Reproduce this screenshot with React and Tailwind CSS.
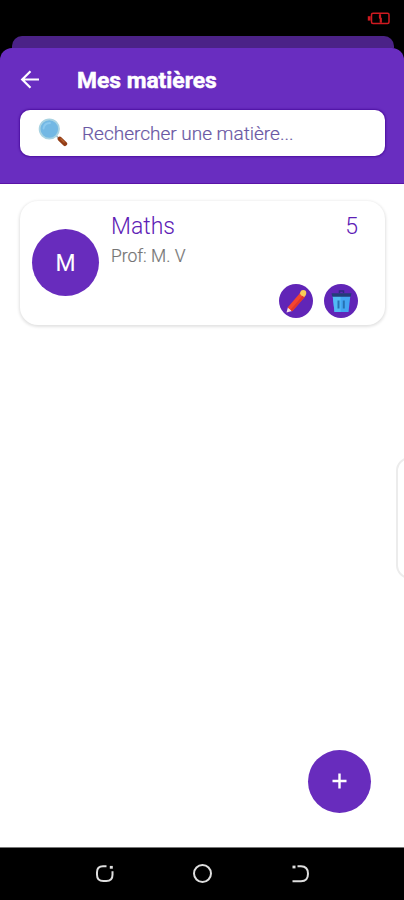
function SearchGlass() {
  return (
    <svg width="30" height="30" viewBox="0 0 30 30" fill="none">
      <path d="M18 17.500l3 3" stroke="#a3b3ba" strokeWidth="1.600" />
      <path d="M21.800 20.800l5.200 5" stroke="#933d16" strokeWidth="4.400" strokeLinecap="round" />
      <path d="M22.500 20.500l4 4" stroke="#b5612f" strokeWidth="1.300" />
      <circle cx="11.300" cy="11" r="9.700" fill="#73b8e4" stroke="#a9d3e2" strokeWidth="1.800" />
      <path d="M5.500 10.500c.5-3.500 3-5.500 6.500-5.500" stroke="#8ac8ee" strokeWidth="1.800" strokeLinecap="round" />
    </svg>
  );
}

function Pencil() {
  return (
    <svg width="34" height="34" viewBox="0 0 34 34">
      <path d="M7.500 28.500l1.500-5.500 4.200 4z" fill="#f8dfe5" />
      <path d="M8.600 23.400L21.500 8.500l4.600 4L13.200 27.200z" fill="#f5452f" />
      <path d="M11.500 25.700L24.300 11l1.800 1.500L13.200 27.200z" fill="#e0362c" />
      <path d="M20.700 9.400l1.600-1.800 4.400 3.800-1.600 1.800z" fill="#eab26a" />
      <circle cx="24.300" cy="8.900" r="3" fill="#f7cd57" />
    </svg>
  );
}

function Trash() {
  return (
    <svg width="34" height="34" viewBox="0 0 34 34" fill="none">
      <path d="M15.500 9V7h4V9" stroke="#2d2a80" strokeWidth="1.500" />
      <path d="M8.700 12h17.600l-1.800 16H10.500z" fill="#43a5f2" />
      <path d="M8.700 12h8v16h-6.200z" fill="#52baf4" />
      <path d="M7.500 9.300h20l-.8 3.400H8.300z" fill="#233c78" />
      <path d="M14.500 16.500v8M19.800 16.500v8" stroke="#2672b3" strokeWidth="2" />
    </svg>
  );
}

function NavBar() {
  return (
    <nav className="h-[53px] shrink-0 border-t border-[#777] bg-black">
      <svg width="404" height="52" viewBox="0 848 404 52" fill="none" stroke="#dedede" strokeWidth="2">
        <path d="M106.500 866.200h-3.500q-6 0-6 6v2.500q0 6.300 6.300 6.300h3q6.200 0 6.200-6.300v-3.500" />
        <path d="M109.800 867.300h3" strokeWidth="2.800" />
        <circle cx="202.500" cy="873.500" r="8.500" />
        <path d="M297.500 866.200h3.500q7 0 7 7.500t-7 7.500h-8.500" />
        <path d="M292.500 867h3" strokeWidth="2.800" />
      </svg>
    </nav>
  );
}

export default function App() {
  return (
    <div className="relative flex h-[900px] w-[404px] flex-col overflow-hidden bg-white font-['Roboto',sans-serif]">
      <div className="flex h-12 shrink-0 flex-col justify-between bg-black">
        <svg className="mt-3 ml-[367px]" width="26" height="13" viewBox="0 0 26 13" fill="none">
          <rect x="4.500" y="1.200" width="17.500" height="10.300" rx="1.500" stroke="#cf1a20" strokeWidth="1.500" />
          <path d="M.8 4.200h2.800v4.400H.8z" fill="#cf1a20" />
          <path d="M13 2.200v3.500l.8 1v4" stroke="#cf1a20" strokeWidth="2.200" />
        </svg>
        <div className="mr-2.5 ml-3 h-3 rounded-t-[10px] bg-[#4b2287]" />
      </div>
      <div className="shrink-0 bg-black">
        <header className="h-[136px] rounded-t-xl border-b border-[#5a14a7] bg-[#692dc0] pr-[19px] pl-5">
          <div className="flex h-[62px] items-center pt-0.5">
            <svg width="20" height="20" viewBox="0 0 20 20" fill="none" stroke="white" strokeWidth="2.200">
              <path d="M19 9.500H2.500M10.500 1.300L2.200 9.500l8.300 8.200" />
            </svg>
            <h1 className="ml-[37px] pt-0.5 text-[22.800px] leading-none font-bold whitespace-nowrap text-white [-webkit-text-stroke:0.5px_white]">Mes matières</h1>
          </div>
          <div className="flex h-[46px] items-center rounded-[10px] bg-white pl-[18px] shadow-[0_0_2px_1px_#4d10a0]">
            <SearchGlass />
            <span className="ml-3.5 pt-[3px] text-[19px] font-light whitespace-nowrap text-[#6a58a4] [-webkit-text-stroke:0.2px_#6a58a4]">Rechercher une matière...</span>
          </div>
        </header>
      </div>
      <main className="flex-1 pt-[17px] pr-[19px] pl-5">
        <article className="flex h-[124px] rounded-[18px] bg-white pl-3 shadow-[0_1px_3px_1px_#e2e2e2]">
          <div className="mt-[28px] flex size-[67px] shrink-0 items-center justify-center rounded-full bg-[#682cbd] pt-1 text-[23px] text-white">M</div>
          <div className="ml-3 flex flex-1 flex-col pr-[27px]">
            <div className="mt-3 flex justify-between text-[23px] leading-7 font-light text-[#5d20b5]">
              <span>Maths</span>
              <span>5</span>
            </div>
            <p className="mt-[5px] text-[17.500px] leading-5 font-light text-[#757575] [-webkit-text-stroke:0.2px_#757575]">Prof: M. V</p>
            <div className="mt-[18px] flex justify-end gap-[11px]">
              <button className="size-[34px] rounded-full bg-[#6125b7]"><Pencil /></button>
              <button className="size-[34px] rounded-full bg-[#6125b7]"><Trash /></button>
            </div>
          </div>
        </article>
      </main>
      <button className="absolute top-[750px] left-[308px] flex size-[63px] items-center justify-center rounded-full bg-[#682cbd]">
        <svg className="mb-0.5" width="15" height="16" viewBox="0 0 15 16" stroke="white" strokeWidth="2.400">
          <path d="M7.500 .5v15M.5 8h14" />
        </svg>
      </button>
      <div className="absolute top-[457px] left-[396px] h-[122px] w-7 rounded-[14px] border-2 border-[#ececec] bg-white" />
      <NavBar />
    </div>
  );
}
